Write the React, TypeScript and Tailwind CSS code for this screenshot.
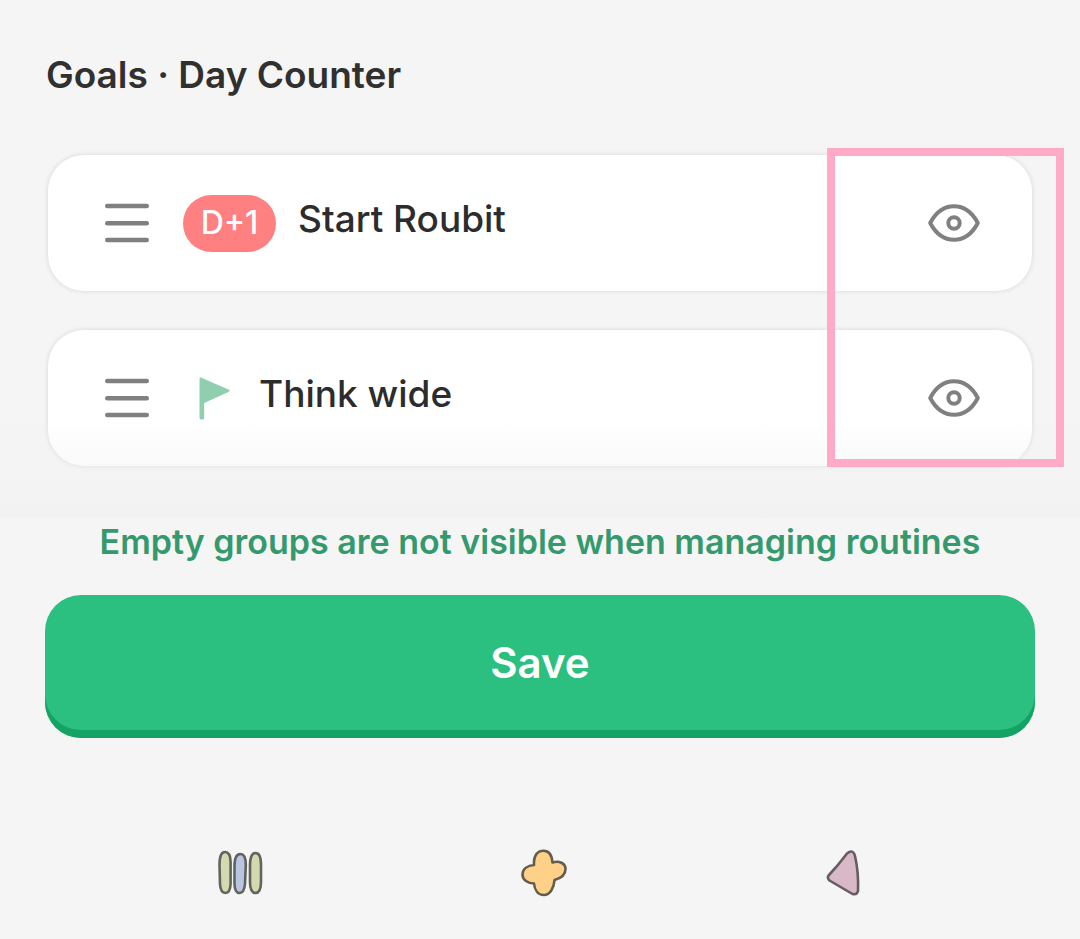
import type { ReactNode } from 'react';

function HandleIcon() {
  return (
    <svg width="46" height="46" viewBox="0 0 46 46" fill="none" stroke="#808080" strokeWidth="4.4" strokeLinecap="round" aria-hidden="true">
      <path d="M3.2 6H42.8M3.2 23.3H42.8M3.2 40H42.8" />
    </svg>
  );
}

function EyeIcon() {
  return (
    <svg width="54" height="40" viewBox="0 0 54 40" fill="none" stroke="#808080" strokeWidth="4" strokeLinejoin="round" aria-hidden="true">
      <path d="M3.2 20C9 9 17 3.300 27 3.300S45 9 50.800 20C45 31 37 36.700 27 36.700S9 31 3.200 20Z" />
      <circle cx="27" cy="20" r="5.700" />
    </svg>
  );
}

function FlagIcon() {
  return (
    <svg width="32" height="44" viewBox="0 0 32 44" fill="#8fcfb0" aria-hidden="true">
      <path d="M0.500 3Q0.500 1 2.500 1.700L30 13.800Q31.500 14.800 30 15.800L5.200 27V42Q5.200 43.500 3.500 43.500H2Q0.500 43.500 0.500 42Z" />
    </svg>
  );
}

function GoalCard({ label, children }: { label: string; children: ReactNode }) {
  return (
    <li className="flex h-[136px] items-center rounded-[36px] bg-white pl-14 pr-[51px] shadow-[0_0_4px_1px_rgba(0,0,0,0.09)]">
      <button type="button" aria-label={`Reorder ${label}`} className="mr-[33px] shrink-0">
        <HandleIcon />
      </button>
      {children}
      <span className="grow pb-2 text-[37px] leading-12 font-medium text-[#2c2c2c]">{label}</span>
      <button type="button" aria-label={`Hide ${label}`} className="shrink-0">
        <EyeIcon />
      </button>
    </li>
  );
}

export default function App() {
  return (
    <div className="min-h-screen bg-[#f5f5f5] font-['Inter',sans-serif]">
      <main className="px-12 pt-[51px]">
        <h2 className="-ml-0.5 text-[37px] leading-12 font-semibold text-[#303030]">Goals · Day Counter</h2>
        <div className="relative mt-14">
          <ul className="flex flex-col gap-[39px]">
            <GoalCard label="Start Roubit">
              <span className="mr-[22px] flex h-[57px] w-[93px] shrink-0 items-center justify-center rounded-full bg-[#ff8080] text-[32px] font-medium text-white">
                D+1
              </span>
            </GoalCard>
            <GoalCard label="Think wide">
              <span className="mr-7 ml-4 shrink-0">
                <FlagIcon />
              </span>
            </GoalCard>
          </ul>
          {/* highlight over the visibility toggles */}
          <div className="pointer-events-none absolute -top-[7px] -right-8 -bottom-px z-10 w-[237px] border-8 border-[#ffabc7]" />
        </div>
      </main>

      <footer className="relative px-[45px] pt-[52px]">
        <div className="pointer-events-none absolute inset-x-0 -top-12 h-[100px] bg-linear-to-b from-[#f1f1f1]/0 to-[#f1f1f1]/80" />
        <p className="relative text-center text-[34px] leading-12 font-semibold text-[#349a6d]">
          Empty groups are not visible when managing routines
        </p>
        <button
          type="button"
          className="mt-[29px] h-[143px] w-full rounded-[36px] bg-[#2bbf80] pb-2 text-[42px] font-semibold text-white shadow-[inset_0_-8px_0_#15a365]"
        >
          Save
        </button>
        <nav className="mt-[110px] flex justify-between pr-[174px] pb-10 pl-[171px]">
          <button type="button" aria-label="Recent apps">
            <svg width="46" height="50" viewBox="0 0 46 50" overflow="visible" stroke="#60645c" strokeWidth="2.600" aria-hidden="true">
              <path fill="#d3dab0" d="M9 4C12.500 4 14.500 8 14.600 14V36C14.300 42 13 45 9.500 45S4.300 42 4 36L3.500 17C3.500 9 5 4 9 4Z" />
              <path fill="#b9c5e2" d="M24.500 6C28.500 6 29.800 10 29.800 17L29 36C28.500 42 27 45 23.500 45S18.500 41 18.500 35V18C18.500 10 20 6 24.500 6Z" />
              <path fill="#d3dab0" d="M39.500 5C43.500 5 45 10 45 17V34C45 41 43.500 45 39.500 45S34 41 34 34V18C34 10 35.500 5 39.500 5Z" />
            </svg>
          </button>
          <button type="button" aria-label="Home">
            <svg width="48" height="50" viewBox="0 0 48 50" fill="#ffd088" stroke="#655c4c" strokeWidth="2.600" strokeLinejoin="round" aria-hidden="true">
              <path d="M14 17C13.500 8 17 2.700 23.500 2.700C30 2.700 32 8 32.500 14.500C39 12.500 45.500 15 45.500 21C45.500 27 40 30.500 34.500 32C34 40 30 47 24 47C18 47 14.500 42 14 35.500C8 35.500 2.500 32 2.500 26.500C2.500 20.500 8 17.500 14 17Z" />
            </svg>
          </button>
          <button type="button" aria-label="Back">
            <svg width="36" height="50" viewBox="0 0 36 50" fill="#d9b8c8" stroke="#665d62" strokeWidth="2.600" strokeLinejoin="round" aria-hidden="true">
              <path d="M22 5.500Q28 0.500 30 8C32.500 19 33.500 31 33 43Q32 47 27.500 46L4.500 32.500Q1.500 29.500 4 27Q13 17.500 22 5.500Z" />
            </svg>
          </button>
        </nav>
      </footer>
    </div>
  );
}
